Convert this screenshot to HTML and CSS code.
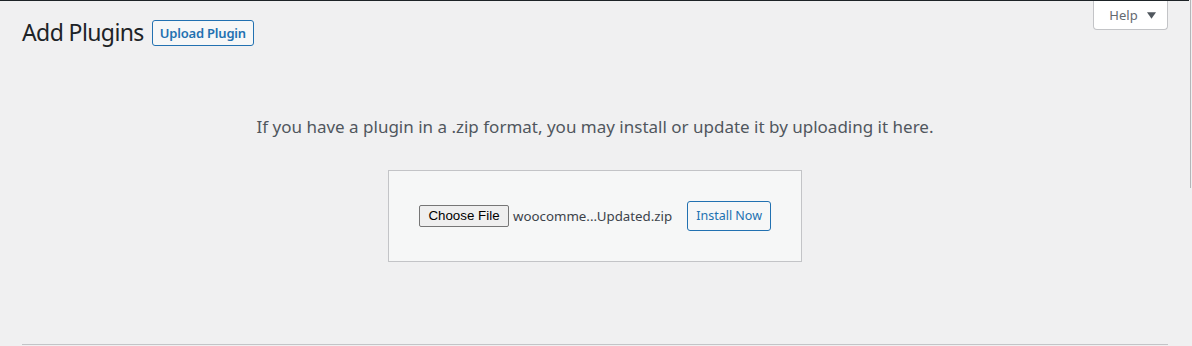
FILE: index.html
```html
<!DOCTYPE html>
<html lang="en">
<head>
    <meta charset="UTF-8">
    <meta name="viewport" content="width=device-width, initial-scale=1.0">
    <title>Add Plugins</title>
    <link rel="stylesheet" href="styles.css">
</head>
<body>
    <div class="admin-bar"></div>
    <div class="scroll-thumb"></div>

    <div class="content">
        <div class="screen-meta-links">
            <button class="show-settings" type="button">
                Help
                <svg class="arrow" viewBox="0 0 10 7" width="9" height="7"><path d="M0 0h10L5 7z" fill="currentColor"/></svg>
            </button>
        </div>

        <div class="wrap">
            <div class="title-row">
                <h1 class="page-title">Add Plugins</h1>
                <a class="page-title-action" href="#">Upload Plugin</a>
            </div>

            <div class="upload-plugin">
                <p class="install-help">If you have a plugin in a .zip format, you may install or update it by uploading it here.</p>
                <form class="upload-form">
                    <div class="file-input">
                        <span class="file-button">Choose File</span>
                        <span class="file-name">woocomme...Updated.zip</span>
                    </div>
                    <button class="button" type="button">Install Now</button>
                </form>
            </div>

            <div class="plugin-list"></div>
        </div>
    </div>
</body>
</html>
```

FILE: styles.css
```css
* {
    box-sizing: border-box;
    margin: 0;
    padding: 0;
}

body {
    background: #f0f0f1;
    color: #3c434a;
    font-family: 'Noto Sans', 'Open Sans', sans-serif;
    font-size: 13px;
    overflow: hidden;
    height: 346px;
}

.admin-bar {
    height: 1px;
    margin-right: 3px;
    background: #1d2327;
}

.scroll-thumb {
    position: absolute;
    top: 0;
    right: 1px;
    width: 1px;
    height: 188px;
    background: #b4b5b8;
}

.content {
    padding: 0 24px 0 22px;
}

.screen-meta-links {
    float: right;
}

.show-settings {
    font-family: inherit;
    font-size: 13px;
    color: #646970;
    background: #fff;
    border: 1px solid #c3c4c7;
    border-top: none;
    border-radius: 0 0 4px 4px;
    width: 75px;
    height: 29px;
    padding: 0 0 0 4px;
    display: flex;
    align-items: center;
    justify-content: center;
    gap: 9px;
}

.show-settings .arrow {
    color: #50575e;
    margin-top: 1px;
}

.title-row {
    display: flex;
    align-items: center;
    gap: 8px;
    padding-top: 17px;
}

.page-title {
    font-size: 23px;
    font-weight: 400;
    letter-spacing: -0.6px;
    color: #1d2327;
    line-height: 1.3;
}

.page-title-action {
    display: inline-block;
    height: 26px;
    padding: 0 7px;
    line-height: 24px;
    font-size: 13px;
    font-weight: 600;
    letter-spacing: -0.2px;
    color: #2271b1;
    background: #f6f7f7;
    border: 1px solid #2271b1;
    border-radius: 3px;
    text-decoration: none;
}

.upload-plugin {
    display: flex;
    flex-direction: column;
    align-items: center;
}

.install-help {
    margin-top: 67px;
    font-size: 17px;
    line-height: 24px;
    color: #50575e;
}

.upload-form {
    display: flex;
    align-items: center;
    gap: 15px;
    margin-top: 31px;
    padding: 30px;
    background: #f6f7f7;
    border: 1px solid #c3c4c7;
}

.file-input {
    display: flex;
    align-items: center;
    gap: 4px;
}

.file-button {
    display: inline-block;
    width: 90px;
    height: 22px;
    line-height: 20px;
    text-align: center;
    font-family: 'Liberation Sans', Arial, sans-serif;
    font-size: 13.33px;
    color: #000;
    background: #efefef;
    border: 1px solid #767676;
    border-radius: 2px;
}

.file-name {
    font-size: 13.3px;
    color: #3c434a;
}

.button {
    font-family: inherit;
    font-size: 12.5px;
    height: 30px;
    padding: 0 8px;
    color: #2271b1;
    background: #f6f7f7;
    border: 1px solid #2271b1;
    border-radius: 3px;
}

.plugin-list {
    margin-top: 82px;
    height: 1px;
    border-top: 1px solid #c3c4c7;
}
```
